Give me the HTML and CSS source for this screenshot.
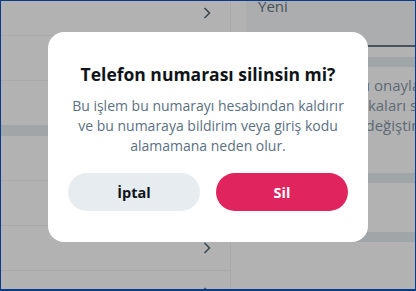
FILE: index.html
```html
<!DOCTYPE html>
<html lang="tr">
<head>
<meta charset="utf-8">
<title>Telefon numarası</title>
<link rel="stylesheet" href="styles.css">
</head>
<body>
<div class="frame">
  <div class="page">
    <div class="list">
      <div class="row"><svg class="chev" viewBox="0 0 8 12" width="8" height="12"><path d="M1.5 1 L6.5 6 L1.5 11"/></svg></div>
      <div class="row"><svg class="chev" viewBox="0 0 8 12" width="8" height="12"><path d="M1.5 1 L6.5 6 L1.5 11"/></svg></div>
      <div class="row"><svg class="chev" viewBox="0 0 8 12" width="8" height="12"><path d="M1.5 1 L6.5 6 L1.5 11"/></svg></div>
      <div class="band"></div>
      <div class="row"><svg class="chev" viewBox="0 0 8 12" width="8" height="12"><path d="M1.5 1 L6.5 6 L1.5 11"/></svg></div>
      <div class="row"><svg class="chev" viewBox="0 0 8 12" width="8" height="12"><path d="M1.5 1 L6.5 6 L1.5 11"/></svg></div>
      <div class="row"><svg class="chev" viewBox="0 0 8 12" width="8" height="12"><path d="M1.5 1 L6.5 6 L1.5 11"/></svg></div>
      <div class="row"><svg class="chev" viewBox="0 0 8 12" width="8" height="12"><path d="M1.5 1 L6.5 6 L1.5 11"/></svg></div>
    </div>
    <div class="detail">
      <div class="field"><span class="field-label">Yeni</span></div>
      <div class="band band-top"></div>
      <div class="hint">
        <div class="hint-line">Telefon numaranı onaylamak için</div>
        <div class="hint-line">Ayarlarınız ve başkaları seni bulur</div>
        <div class="hint-line">Bunu her zaman değiştirebilirsin</div>
      </div>
      <div class="band band-mid"></div>
      <div class="band band-low"></div>
    </div>
  </div>
  <div class="backdrop">
    <div class="dialog" role="dialog">
      <h1 class="dialog-title">Telefon numarası silinsin mi?</h1>
      <p class="dialog-text">Bu işlem bu numarayı hesabından kaldırır ve bu numaraya bildirim veya giriş kodu alamamana neden olur.</p>
      <div class="dialog-actions">
        <button class="btn btn-cancel">İptal</button>
        <button class="btn btn-delete">Sil</button>
      </div>
    </div>
  </div>
</div>
</body>
</html>
```

FILE: styles.css
```css
* { box-sizing: border-box; }
html, body { margin: 0; padding: 0; }
body {
  width: 416px;
  height: 291px;
  overflow: hidden;
  font-family: "Open Sans", "Noto Sans", "DejaVu Sans", sans-serif;
  background: #fff;
}
.frame {
  position: relative;
  width: 416px;
  height: 291px;
  border: 1px solid #0a3a8c;
  border-bottom-width: 2px;
  overflow: hidden;
}
.page {
  display: grid;
  grid-template-columns: 230px 1fr;
  height: 100%;
  white-space: nowrap;
}
.list {
  border-right: 1px solid #eff3f4;
  margin-top: -10px;
}
.row {
  height: 45px;
  border-bottom: 1px solid #eff3f4;
  display: flex;
  align-items: center;
  justify-content: flex-end;
  padding-right: 19px;
}
.chev {
  fill: none;
  stroke: #536471;
  stroke-width: 1.5;
}
.band {
  height: 10px;
  background: #e6ecf0;
}
.list .band { margin-top: -1px; height: 11px; }
.detail {
  overflow: hidden;
  min-width: 0;
}
.field {
  margin-left: 15px;
  height: 49px;
  margin-top: -1px;
  background: #f5f8fa;
  border-bottom: 2px solid #657786;
  padding: 0 12px;
}
.field-label {
  display: block;
  font-size: 15px;
  line-height: 16px;
  margin-top: -3px;
  color: #657786;
}
.band-top { margin-top: 10px; }
.hint {
  margin-top: 8px;
  padding-left: 15px;
  font-size: 15px;
  line-height: 20px;
  color: #8899a6;
}
.band-mid { margin-top: 38px; }
.band-low { margin-top: 49px; }

.backdrop {
  position: absolute;
  inset: 0;
  background: rgba(0, 0, 0, 0.3);
  display: flex;
  align-items: center;
  justify-content: center;
  padding-bottom: 16px;
}
.dialog {
  width: 320px;
  background: #fff;
  border-radius: 16px;
  padding: 30px 20px 31px;
  text-align: center;
}
.dialog-title {
  margin: 0;
  font-size: 17.5px;
  line-height: 24px;
  font-weight: 700;
  color: #0f1419;
}
.dialog-text {
  margin: 10px 0 0;
  font-size: 14px;
  line-height: 20px;
  color: #5b7083;
}
.dialog-actions {
  margin-top: 17px;
  display: grid;
  grid-template-columns: 1fr 1fr;
  gap: 16px;
}
.btn {
  height: 38px;
  border: 0;
  border-radius: 9999px;
  font-family: inherit;
  font-size: 14.5px;
  font-weight: 700;
}
.btn-cancel { background: #e6ecf0; color: #0f1419; }
.btn-delete { background: #e0245e; color: #fff; }
```
